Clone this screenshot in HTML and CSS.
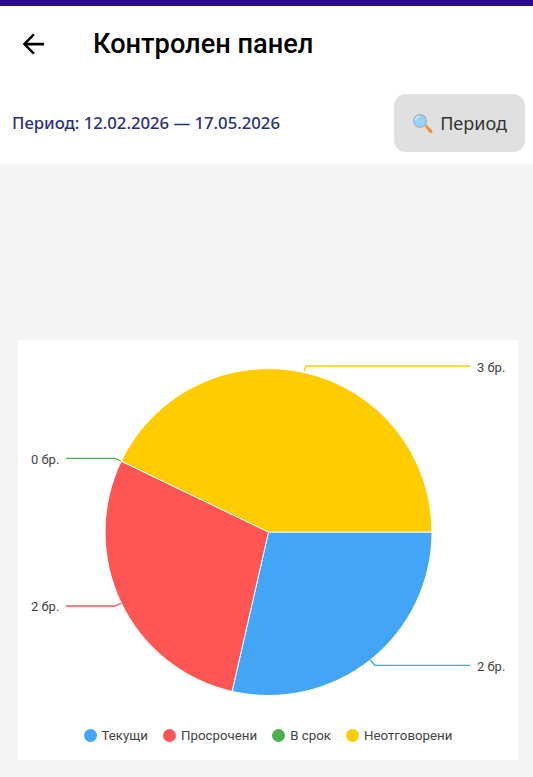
FILE: index.html
```html
<!DOCTYPE html>
<html lang="bg">
<head>
    <meta charset="UTF-8">
    <meta name="viewport" content="width=device-width, initial-scale=1.0">
    <title>Контролен панел</title>
    <link rel="stylesheet" href="styles.css">
</head>
<body>
    <div class="status-bar"></div>

    <header class="toolbar">
        <svg class="back-icon" width="30" height="30" viewBox="0 0 24 24">
            <path d="M20 10.900H6.700l5.900-5.900L11.200 3.600 3 12l8.200 8.400 1.400-1.400-5.900-5.900H20z"/>
        </svg>
        <h1>Контролен панел</h1>
    </header>

    <div class="period-row">
        <span class="period-text">Период: 12.02.2026 — 17.05.2026</span>
        <button class="period-button">
            <svg width="21" height="21" viewBox="0 0 21 21">
                <path d="M12.600 13.200l1.500-1.500 6 5.600c.6.6.6 1.500 0 2.100l-.3.3c-.6.6-1.500.6-2.100 0z" fill="#f19020"/>
                <circle cx="8" cy="8" r="7" fill="#a9b4bc"/>
                <circle cx="8" cy="8" r="5.600" fill="#8fd6fb"/>
                <path d="M3.600 7.400a4.600 4.600 0 0 1 4-4" stroke="#d8f2ff" stroke-width="1.400" fill="none"/>
            </svg>
            Период
        </button>
    </div>

    <main class="content">
        <section class="chart-card">
            <svg class="pie" width="500" height="378" viewBox="0 0 500 378">
                <!-- center 250.500,192 r163.500 -->
                <path class="slice" d="M250.500 192L414 192A163.500 163.500 0 0 1 214.100 351.400Z" fill="#42a5f5"/>
                <path class="slice" d="M250.500 192L214.100 351.400A163.500 163.500 0 0 1 103.200 121.100Z" fill="#ff5555"/>
                <path class="slice" d="M250.500 192L103.200 121.100A163.500 163.500 0 0 1 414 192Z" fill="#ffcc00"/>

                <path class="line" d="M352 320L357 325.300H452" stroke="#42a5f5"/>
                <path class="line" d="M103 263L97 266H48" stroke="#ff5555"/>
                <path class="line" d="M103 121L97 118.300H48" stroke="#4caf50"/>
                <path class="line" d="M286 31L288 26H452" stroke="#ffcc00"/>

                <text x="459" y="32" class="label">3 бр.</text>
                <text x="13" y="124" class="label">0 бр.</text>
                <text x="13" y="271" class="label">2 бр.</text>
                <text x="459" y="331" class="label">2 бр.</text>
            </svg>

            <div class="legend">
                <span class="legend-item"><i class="dot dot-blue"></i>Текущи</span>
                <span class="legend-item"><i class="dot dot-red"></i>Просрочени</span>
                <span class="legend-item"><i class="dot dot-green"></i>В срок</span>
                <span class="legend-item"><i class="dot dot-yellow"></i>Неотговорени</span>
            </div>
        </section>
    </main>
</body>
</html>
```

FILE: styles.css
```css
html, body {
    height: 100%;
}

body {
    margin: 0;
    font-family: Roboto, sans-serif;
    background-color: #fff;
    display: flex;
    flex-direction: column;
}

.status-bar {
    height: 6px;
    background-color: #2c0b93;
}

.toolbar {
    height: 76px;
    display: flex;
    align-items: center;
    padding-left: 19px;
}

.back-icon {
    fill: #000;
    margin-right: 44px;
}

.toolbar h1 {
    margin: 0;
    font-size: 27.200px;
    font-weight: 500;
    color: #000;
}

.period-row {
    height: 82px;
    display: flex;
    align-items: center;
    justify-content: space-between;
    padding: 0 8px 0 12px;
}

.period-text {
    font-family: "Noto Sans", sans-serif;
    font-size: 16.700px;
    font-weight: 500;
    color: #283082;
    margin-bottom: 2px;
}

.period-button {
    width: 131px;
    height: 58px;
    display: flex;
    align-items: center;
    justify-content: center;
    gap: 7px;
    border: none;
    border-radius: 12px;
    background-color: #e0e0e0;
    color: #333;
    font-family: "Noto Sans", sans-serif;
    font-size: 18px;
    padding: 0;
}

.content {
    flex: 1;
    background-color: #f4f4f4;
    display: flex;
    flex-direction: column;
    justify-content: flex-end;
    padding: 0 15px 17px 18px;
}

.chart-card {
    height: 420px;
    background-color: #fff;
}

.pie {
    display: block;
}

.slice {
    stroke: #fff;
    stroke-width: 1;
}

.line {
    fill: none;
    stroke-width: 1.300;
}

.label {
    font-size: 13px;
    fill: #444;
}

.legend {
    display: flex;
    justify-content: center;
    gap: 15px;
    margin-top: 10px;
    font-size: 13.300px;
    color: #444;
}

.legend-item {
    display: flex;
    align-items: center;
    gap: 5px;
}

.dot {
    width: 13px;
    height: 13px;
    border-radius: 50%;
}

.dot-blue { background-color: #42a5f5; }
.dot-red { background-color: #ff5555; }
.dot-green { background-color: #4caf50; }
.dot-yellow { background-color: #ffcc00; }
```
